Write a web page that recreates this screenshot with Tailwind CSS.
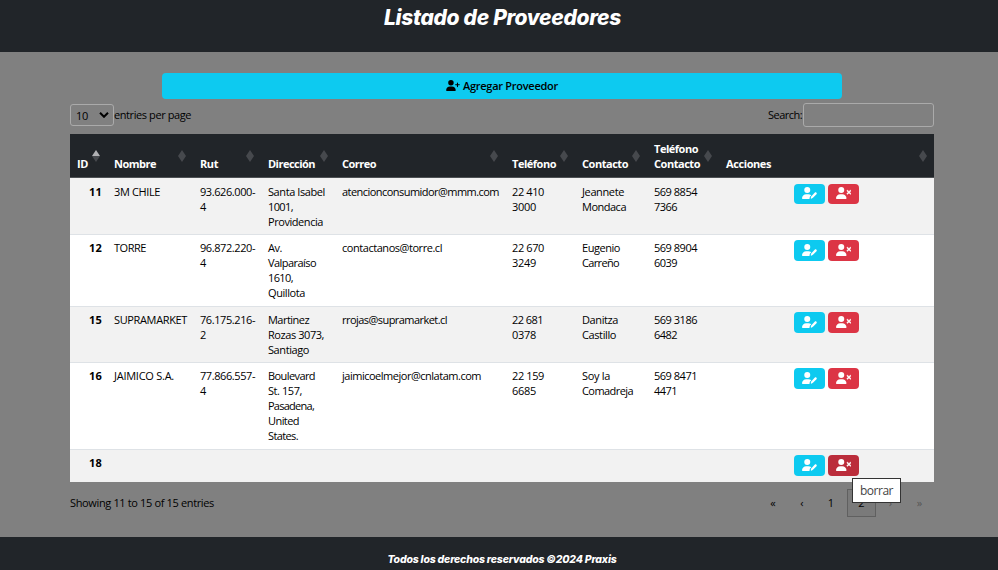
<!DOCTYPE html>
<html lang="es">
<head>
<meta charset="utf-8">
<title>Listado de Proveedores</title>
<script src="https://cdn.jsdelivr.net/npm/@tailwindcss/browser@4"></script>
</head>
<body class="flex h-[570px] w-[998px] flex-col overflow-hidden bg-[#808080] font-['Open_Sans','Noto_Sans',sans-serif] text-[11px] leading-[15px] text-black">
<svg class="hidden">
  <symbol id="plus" viewBox="0 0 640 512"><path d="M96 128a128 128 0 1 1 256 0A128 128 0 1 1 96 128zM0 482.300C0 383.800 79.800 304 178.300 304h91.400C368.200 304 448 383.800 448 482.300c0 16.400-13.300 29.700-29.700 29.700H29.700C13.300 512 0 498.700 0 482.300zM504 312V248H440c-13.300 0-24-10.700-24-24s10.700-24 24-24h64V136c0-13.300 10.700-24 24-24s24 10.700 24 24v64h64c13.300 0 24 10.700 24 24s-10.700 24-24 24H552v64c0 13.300-10.700 24-24 24s-24-10.700-24-24z"/></symbol>
  <symbol id="pen" viewBox="0 0 640 512"><path d="M224 256A128 128 0 1 0 224 0a128 128 0 1 0 0 256zM178 304C80 304 0 384 0 482c0 17 13 30 30 30h293c-4-10-4-20-1-31l15-60c3-11 9-21 17-29l45-45c-34-27-79-43-129-43z"/><path d="M549 235c16-16 41-16 57 0l14 15c16 15 16 41 0 56L468 458c-4 4-9 7-15 8l-60 30c-8 3-20-8-19-19l10-60c1-6 4-11 8-15z"/></symbol>
  <symbol id="xmark" viewBox="0 0 640 512"><path d="M96 128a128 128 0 1 1 256 0A128 128 0 1 1 96 128zM0 482.300C0 383.800 79.800 304 178.300 304h91.400C368.200 304 448 383.800 448 482.300c0 16.400-13.300 29.700-29.700 29.700H29.700C13.300 512 0 498.700 0 482.300z"/><path d="M471 143c9.400-9.400 24.600-9.400 33.900 0l47 47 47-47c9.400-9.400 24.600-9.400 33.900 0s9.400 24.600 0 33.900l-47 47 47 47c9.400 9.400 9.400 24.600 0 33.900s-24.600 9.400-33.900 0l-47-47-47 47c-9.400 9.400-24.600 9.400-33.900 0s-9.400-24.600 0-33.900l47-47-47-47c-9.400-9.400-9.400-24.600 0-33.900z" stroke="white" stroke-width="18"/></symbol>
  <symbol id="sort" viewBox="0 0 8 12"><path d="M4 0l4 6H0zM0 6h8l-4 6z" fill="#46494d"/></symbol>
  <symbol id="sortasc" viewBox="0 0 8 12"><path d="M4 6h4l-4 6-4-6z" fill="#46494d"/><path d="M4 0l4 6H0z" fill="#b0b1b3"/></symbol>
</svg>

<header class="flex h-[52px] shrink-0 justify-center bg-[#212529] pt-1">
  <h1 class="pl-[7px] font-['Inter',sans-serif] text-[21px] leading-7 font-extrabold whitespace-nowrap text-white italic"><span data-w="236">Listado de Proveedores</span></h1>
</header>

<main class="flex h-[485px] shrink-0 flex-col pt-[21px] pr-16 pl-[70px]">
  <button class="ml-[92px] flex h-[26px] w-[680px] items-center justify-center gap-[3px] rounded bg-[#0dcaf0] pb-px font-semibold">
    <svg class="h-[11px] w-[14px]"><use href="#plus"/></svg><span data-w="94">Agregar Proveedor</span>
  </button>
  <div class="mt-1 flex h-6 items-center justify-between">
    <div class="flex items-center">
      <div class="flex h-[22px] w-11 items-center justify-between rounded-[3px] border border-[#aaa] pr-1 pl-[5px]"><span data-w="11">10</span>
        <svg class="h-[6px] w-[10px]" viewBox="0 0 10 6" fill="none" stroke="black" stroke-width="2"><path d="M1 .8l4 4 4-4"/></svg>
      </div>
      <span class="pb-px" data-w="76">entries per page</span>
    </div>
    <div class="flex items-center"><span class="mr-px pb-px" data-w="33">Search:</span><div class="h-6 w-[131px] rounded-[3px] border border-[#aaa]"></div></div>
  </div>
  <table class="mt-[7px] w-[864px] table-fixed border-collapse">
    <colgroup><col class="w-[37px]"><col class="w-[86px]"><col class="w-[68px]"><col class="w-[74px]"><col class="w-[170px]"><col class="w-[70px]"><col class="w-[72px]"><col class="w-[72px]"><col class="w-[215px]"></colgroup>
    <thead><tr id="head" class="h-[43px] bg-[#212529] text-left align-bottom font-bold text-white"></tr></thead>
    <tbody id="rows"></tbody>
  </table>
  <div class="mt-[7px] flex h-7 items-center justify-between">
    <span class="pb-px" data-w="143">Showing 11 to 15 of 15 entries</span>
    <nav class="flex items-center text-center">
      <span class="w-[29px] pr-[3px] pb-px">«</span><span class="w-[29px] pr-[3px] pb-px">‹</span><span class="w-[29px] pr-[3px] pb-px">1</span>
      <span class="flex h-7 w-[29px] items-center justify-center border border-[#606060] bg-[#7a7a7a] pb-px">2</span>
      <span class="w-[29px] pb-px text-[#555]">›</span><span class="w-[29px] pb-px text-[#555]">»</span>
    </nav>
  </div>
</main>

<footer class="flex h-[33px] shrink-0 justify-center bg-[#212529] pt-[15px]">
  <p class="pl-[6px] font-['Inter',sans-serif] text-[10.500px] leading-[15px] font-extrabold whitespace-nowrap text-white italic"><span data-w="228">Todos los derechos reservados ©2024 Praxis</span></p>
</footer>

<div class="absolute top-[478px] left-[852px] flex h-[25px] w-[49px] items-center justify-center border border-[#333] bg-white text-[12px] text-[#444]"><span data-w="32">borrar</span></div>

<script>
const heads = [['ID',11],['Nombre',42],['Rut',18],['Dirección',47],['Correo',34],['Teléfono',44],['Contacto',46],['Teléfono|Contacto','44|46'],['Acciones',45]];
document.getElementById('head').innerHTML = heads.map(([t, w], i) => {
  const ws = String(w).split('|');
  return `<th class="relative pb-[6px] pl-[7px]">${t.split('|').map((s, k) => `<div class="whitespace-nowrap"><span data-w="${ws[k] - 1}">${s}</span></div>`).join('')}<svg class="absolute top-4 right-[7px] h-3 w-2"><use href="#${i ? 'sort' : 'sortasc'}"/></svg></th>`;
}).join('');

const rows = [
  ['h-[57px]', '11', [['3M CHILE:46'],['93.626.000-:55','4:6'],['Santa Isabel:57','1001,:25','Providencia:55'],['atencionconsumidor@mmm.com:157'],['22 410:32','3000:24'],['Jeannete:42','Mondaca:44'],['569 8854:43','7366:23']]],
  ['h-[72px]', '12', [['TORRE:32'],['96.872.220-:55','4:6'],['Av.:14','Valparaíso:48','1610,:25','Quillota:37'],['contactanos@torre.cl:100'],['22 670:32','3249:24'],['Eugenio:38','Carreño:37'],['569 8904:43','6039:23']]],
  ['h-14', '15', [['SUPRAMARKET:73'],['76.175.216-:55','2:6'],['Martinez:41','Rozas 3073,:56','Santiago:41'],['rrojas@supramarket.cl:105'],['22 681:31','0378:24'],['Danitza:36','Castillo:34'],['569 3186:43','6482:23']]],
  ['h-[87px]', '16', [['JAIMICO S.A.:60'],['77.866.557-:55','4:6'],['Boulevard:47','St. 157,:34','Pasadena,:46','United:31','States.:30'],['jaimicoelmejor@cnlatam.com:139'],['22 159:32','6685:24'],['Soy la:28','Comadreja:51'],['569 8471:43','4471:23']]],
  ['h-[33px]', '18', [[],[],[],[],[],[],[]]]
];
document.getElementById('rows').innerHTML = rows.map(([h, id, cells], i) => {
  const pt = i ? 'pt-[5px]' : 'pt-[6px]';
  const bh = i ? 'h-[21px]' : 'h-5';
  return `<tr class="${h} border-t align-top ${i ? 'border-[#dee2e6]' : 'border-[#4d5154]'} ${i % 2 ? 'bg-white' : 'bg-[#f2f2f2]'}">
  <td class="${pt} pr-[5px] text-right font-bold"><span data-w="12">${id}</span></td>` +
  cells.map(c => `<td class="${pt} pl-[7px]">${c.map(s => { const [t, w] = s.split(':'); return `<div class="whitespace-nowrap"><span data-w="${w - 1}">${t}</span></div>`; }).join('')}</td>`).join('') +
  `<td class="${pt}"><div class="flex justify-center gap-[3px]">
    <button class="flex ${bh} w-[31px] items-center justify-center rounded bg-[#0dcaf0] pb-px"><svg class="h-[12px] w-[15px] fill-white"><use href="#pen"/></svg></button>
    <button class="flex ${bh} w-[31px] items-center justify-center rounded pb-px ${i === 4 ? 'bg-[#bb2d3b]' : 'bg-[#dc3545]'}"><svg class="h-[12px] w-[15px] fill-white"><use href="#xmark"/></svg></button>
  </div></td></tr>`;
}).join('');

// Tune tracking once styles are in force so each label keeps its intended measure.
function fit() {
  document.querySelectorAll('[data-w]').forEach(el => {
    el.style.letterSpacing = '0px';
    const n = el.textContent.length;
    el.style.letterSpacing = ((+el.dataset.w + 1 - el.getBoundingClientRect().width) / n) + 'px';
  });
}
window.addEventListener('load', () => { fit(); document.fonts.ready.then(fit); });
</script>
</body>
</html>
